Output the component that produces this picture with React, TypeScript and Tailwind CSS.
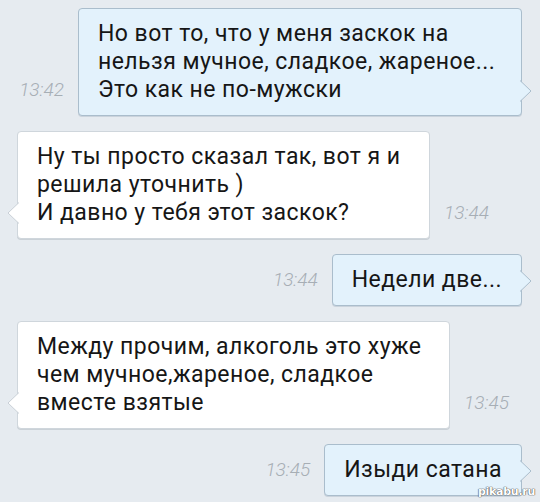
import React from 'react';

type Msg = {
  out: boolean;
  lines: string[];
  time: string;
  width?: string;
};

const MESSAGES: Msg[] = [
  { out: true, lines: ['Но вот то, что у меня заскок на', 'нельзя мучное, сладкое, жареное...', 'Это как не по-мужски'], time: '13:42', width: 'w-[444px]' },
  { out: false, lines: ['Ну ты просто сказал так, вот я и', 'решила уточнить )', 'И давно у тебя этот заскок?'], time: '13:44', width: 'w-[413px]' },
  { out: true, lines: ['Недели две...'], time: '13:44' },
  { out: false, lines: ['Между прочим, алкоголь это хуже', 'чем мучное,жареное, сладкое', 'вместе взятые'], time: '13:45', width: 'w-[433px]' },
  { out: true, lines: ['Изыди сатана'], time: '13:45' },
];

// little speech tail drawn on the bubble edge
const Tail = ({ out }: { out: boolean }) => {
  if (out) {
    return (
      <svg className="absolute -right-[11px] bottom-[13px]" width="12" height="22" viewBox="0 0 12 22">
        <path d="M0 0.5 L11 11 L0 21.5 Z" fill="#e3f2fc" />
        <path d="M0 0.5 L11 11 L0 21.5" fill="none" stroke="#aabdcc" strokeWidth="1" />
      </svg>
    );
  }
  return (
    <svg className="absolute -left-[11px] bottom-[14px]" width="12" height="22" viewBox="0 0 12 22">
      <path d="M12 0.5 L1 11 L12 21.5 Z" fill="#ffffff" />
      <path d="M12 0.5 L1 11 L12 21.5" fill="none" stroke="#c9d0d7" strokeWidth="1" />
    </svg>
  );
};

const Bubble = ({ msg }: { msg: Msg }) => {
  const bubbleClass = msg.out
    ? 'bg-[#e3f2fc] border-[#aabdcc] shadow-[0_1px_0_rgba(120,140,160,0.25)]'
    : 'bg-white border-[#cfd6dc] shadow-[0_1px_0_rgba(120,130,140,0.25)]';

  const time = (
    <span className="italic font-light text-[19px] leading-[28px] text-[#a7aeb5] mb-3 shrink-0">
      {msg.time}
    </span>
  );

  return (
    <div className={`flex items-end gap-[14px] ${msg.out ? 'justify-end' : 'justify-start'}`}>
      {msg.out && time}
      <div className={`relative border rounded-[4px] px-[19px] py-[11px] ${bubbleClass} ${msg.width ?? ''}`}>
        {msg.lines.map((l, i) => (
          <div key={i} className="text-[23px] leading-[28px] tracking-[0.45px] text-[#161616] whitespace-nowrap">
            {l}
          </div>
        ))}
        <Tail out={msg.out} />
      </div>
      {!msg.out && time}
    </div>
  );
};

export default function App() {
  return (
    <div
      className="relative w-[540px] h-[502px] overflow-hidden bg-[#e6ebf0] pt-2 pl-[17px] pr-[18px]"
      style={{ fontFamily: 'Roboto, "Noto Sans", sans-serif' }}
    >
      <div className="flex flex-col gap-[15px]">
        {MESSAGES.map((m, i) => (
          <Bubble key={i} msg={m} />
        ))}
      </div>

      {/* watermark */}
      <div
        className="absolute right-[5px] bottom-[5px] text-[11px] font-bold leading-none text-white tracking-tight"
        style={{ fontFamily: '"DejaVu Sans", sans-serif', textShadow: '0 0 1px #555, 0 0 1px #555, 0 0 1px #555' }}
      >
        pikabu.ru
      </div>
    </div>
  );
}
